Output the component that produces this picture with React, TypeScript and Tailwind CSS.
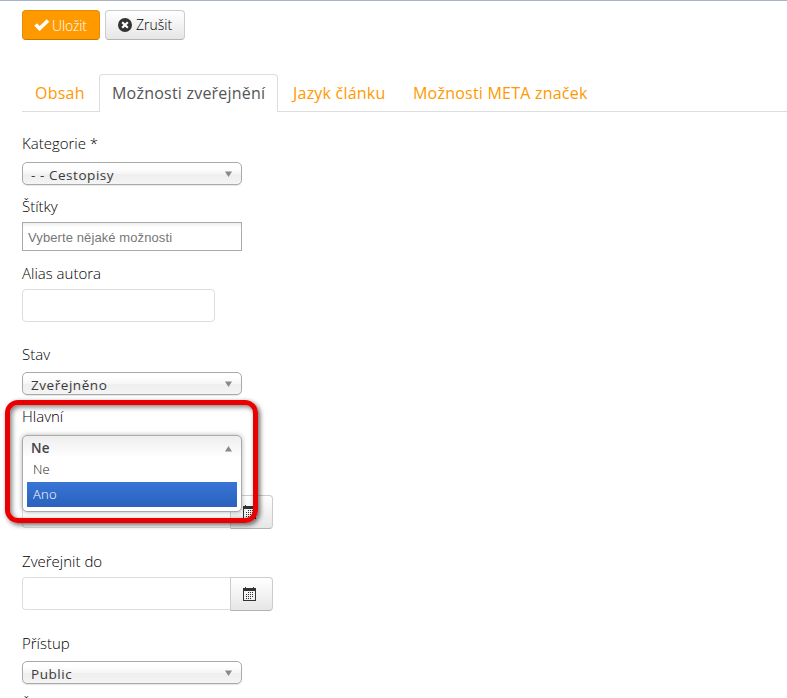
import React from 'react';
import clsx from 'clsx';

const tabs = [
  { label: 'Obsah', className: 'w-[77px] pl-[13px]' },
  { label: 'Možnosti zveřejnění', className: 'w-[179px] pl-[12px]', active: true },
  { label: 'Jazyk článku', className: 'w-[121px] pl-[15px]' },
  { label: 'Možnosti META značek', className: 'w-[200px] pl-[14px]' },
];

const CalendarIcon = () => (
  <svg width="13" height="14" viewBox="0 0 13 14" shapeRendering="crispEdges" fill="#333">
    <path d="M0 1h2V0h1v1h7V0h1v1h2v13H0zM1 4v9h11V4z" />
    <path d="M5 5h1v1H5zM7 5h1v1H7zM9 5h1v1H9zM3 7h1v1H3zM5 7h1v1H5zM7 7h1v1H7zM9 7h1v1H9zM3 9h1v1H3zM5 9h1v1H5zM7 9h1v1H7zM9 9h1v1H9zM3 11h1v1H3zM5 11h1v1H5zM7 11h1v1H7z" />
  </svg>
);

const Label = ({ children, className }: { children: React.ReactNode; className?: string }) => (
  <label className={clsx('block h-5 text-[15px] leading-5 font-light whitespace-nowrap text-black', className)}>
    {children}
  </label>
);

const Arrow = ({ up }: { up?: boolean }) => (
  <svg width="7" height="6" viewBox="0 0 7 6" fill="#888" className="mr-px">
    <path d={up ? 'M3.5 0L7 5.5H0z' : 'M0 .5h7L3.5 6z'} />
  </svg>
);

const Select = ({ value, className }: { value: string; className?: string }) => (
  <div
    className={clsx(
      'flex h-[23px] w-[220px] items-center justify-between rounded-[5px] border border-[#aaa] bg-[linear-gradient(#fff_20%,#f6f6f6_50%,#eee_52%,#f4f4f4_100%)] pr-[8px] pl-2 shadow-[0_1px_1px_rgba(0,0,0,0.1)]',
      className,
    )}
  >
    <span className="pt-[2px] text-[13.5px] leading-5 font-medium tracking-[0.55px] text-[#3a3a3a]">{value}</span>
    <Arrow />
  </div>
);

const DateField = ({ className }: { className?: string }) => (
  <div className={clsx('flex h-[34px] w-[251px]', className)}>
    <div className="h-[33px] w-[208px] rounded-l-[4px] border border-r-0 border-[#ddd] bg-white" />
    <button
      type="button"
      className="flex h-[34px] w-[43px] items-center rounded-r-[4px] border border-[#ccc] border-b-[#b3b3b3] bg-linear-to-b from-white to-[#e6e6e6] pl-3"
    >
      <CalendarIcon />
    </button>
  </div>
);

const App: React.FC = () => {
  return (
    <div className="h-[698px] w-[787px] overflow-hidden border-t border-[#a9b5c6] bg-white pl-[22px] font-['Open_Sans',sans-serif]">
      <div className="mt-[9px] flex gap-[5px]">
        <button
          type="button"
          className="flex h-[30px] w-[78px] items-center rounded-[4px] border border-[#e88b00] border-b-[#c87800] bg-[#ff9900] pl-[11px] text-[14px] font-light tracking-[-0.15px] text-white"
        >
          <svg width="16" height="12" viewBox="0 0 16 12" fill="none" stroke="white" strokeWidth="3.6" className="mr-[2px]">
            <path d="M1.6 5.6l4 4L14 1.5" />
          </svg>
          Uložit
        </button>
        <button
          type="button"
          className="flex h-[30px] w-[80px] items-center rounded-[4px] border border-[#ccc] border-b-[#b3b3b3] bg-linear-to-b from-white to-[#e6e6e6] pb-px pl-3 text-[14px] font-light text-black"
        >
          <svg width="14" height="14" viewBox="0 0 14 14" className="mr-1">
            <circle cx="7" cy="7" r="7" fill="#333" />
            <path d="M4.2 4.2l5.6 5.6M9.8 4.2L4.2 9.8" stroke="white" strokeWidth="2.2" />
          </svg>
          Zrušit
        </button>
      </div>

      <ul className="mt-[34px] flex h-[38px] border-b border-[#ddd]">
        {tabs.map((tab) => (
          <li
            key={tab.label}
            className={clsx(
              'h-[38px] shrink-0 text-[16px] tracking-[0.22px] whitespace-nowrap',
              tab.active
                ? 'rounded-t-[4px] border border-b-0 border-[#ddd] bg-white leading-[36px] text-[#555]'
                : 'leading-[38px] text-[#ff9900]',
              tab.className,
            )}
          >
            {tab.label}
          </li>
        ))}
      </ul>

      <form>
        <Label className="mt-[21px]">Kategorie *</Label>
        <Select value="- - Cestopisy" className="mt-[9px]" />

        <Label className="mt-[11px]">Štítky</Label>
        <div className="mt-[6px] flex h-[29px] w-[220px] items-center border border-[#aaa] bg-[linear-gradient(#eee_1%,#fff_15%)] pt-[2px] pl-[5px] font-['Liberation_Sans',sans-serif] text-[13px] tracking-[0.1px] text-[#777]">
          Vyberte nějaké možnosti
        </div>

        <Label className="mt-[12px]">Alias autora</Label>
        <div className="mt-[6px] h-[33px] w-[193px] rounded-[4px] border border-[#ddd]" />

        <Label className="mt-[22px]">Stav</Label>
        <Select value="Zveřejněno" className="mt-[8px]" />

        <div className="relative mt-[11px] h-[123px]">
          <Label>Hlavní</Label>
          <DateField className="mt-[69px]" />
          {/* opened dropdown */}
          <div className="absolute top-[29px] left-0 h-[77px] w-[220px] rounded-[5px] border border-[#aaa] bg-white bg-[linear-gradient(#eee_0px,#fff_22px)] shadow-[0_0_5px_rgba(0,0,0,0.3)]">
            <div className="flex h-[25px] items-center justify-between pr-[8px] pl-2 text-[13.5px] font-semibold tracking-[0.3px] text-[#444]">
              <span>Ne</span>
              <Arrow up />
            </div>
            <ul className="mx-1 text-[13px] font-light">
              <li className="h-[21px] pl-[6px] leading-[17px] text-[#222]">Ne</li>
              <li className="h-[25px] bg-linear-to-b from-[#3875d7] to-[#2a62bc] pl-[6px] leading-[25px] tracking-[0.2px] text-white">
                Ano
              </li>
            </ul>
          </div>
          {/* highlight frame */}
          <div className="absolute top-[-6px] left-[-17px] h-[123px] w-[253px] rounded-[13px] border-[5px] border-[#ea0000] shadow-[2px_2px_5px_rgba(0,0,0,0.6),inset_2px_2px_5px_rgba(0,0,0,0.5)]" />
        </div>

        <Label className="mt-[22px]">Zveřejnit do</Label>
        <DateField className="mt-[6px]" />

        <Label className="mt-[22px]">Přístup</Label>
        <Select value="Public" className="mt-[8px]" />

        <Label className="mt-[10px]">Štítky</Label>
      </form>
    </div>
  );
};

export default App;
